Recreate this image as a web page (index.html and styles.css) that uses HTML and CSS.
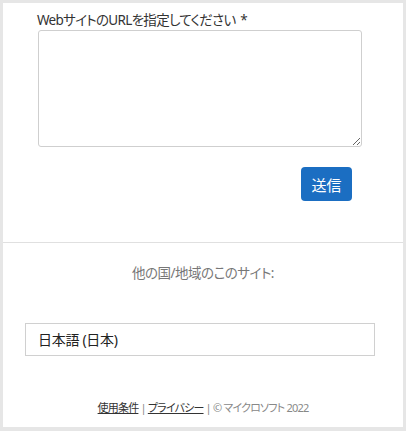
FILE: index.html
```html
<!DOCTYPE html>
<html lang="ja">
<head>
<meta charset="utf-8">
<link rel="stylesheet" href="styles.css">
</head>
<body>
<div class="frame">
  <label class="label" for="url">WebサイトのURLを指定してください *</label>
  <textarea id="url" class="url-box"></textarea>
  <button class="submit" type="button">送信</button>
  <div class="divider"></div>
  <p class="caption">他の国/地域のこのサイト:</p>
  <div class="locale">日本語 (日本)</div>
  <p class="footer"><a href="#">使用条件</a> | <a href="#">プライバシー</a> | © マイクロソフト 2022</p>
</div>
</body>
</html>
```
FILE: styles.css
```css
html, body {
  margin: 0;
  padding: 0;
  background: #ffffff;
}
body {
  font-family: "Noto Sans", "Noto Sans CJK JP", sans-serif;
  font-feature-settings: "palt";
}
.frame {
  box-sizing: border-box;
  width: 406px;
  height: 431px;
  border: 3px solid #e6e6e6;
  border-bottom-width: 4px;
  display: flex;
  flex-direction: column;
  background: #fff;
}
.label {
  margin: 7px 0 0 34px;
  font-size: 13.5px;
  letter-spacing: -0.7px;
  word-spacing: 2px;
  line-height: 20px;
  color: #333;
}
.url-box {
  box-sizing: border-box;
  margin: 0 0 0 35px;
  width: 324px;
  height: 117px;
  border: 1px solid #cfcfcf;
  border-radius: 3px;
  padding: 6px;
  font-family: inherit;
  outline: none;
}
.submit {
  align-self: flex-end;
  margin: 20px 51px 0 0;
  width: 51px;
  height: 34px;
  padding: 0;
  border: none;
  border-radius: 4px;
  background: #1b6ec2;
  color: #fff;
  font-family: inherit;
  font-feature-settings: "palt";
  font-size: 15px;
}
.divider {
  margin-top: 41px;
  height: 1px;
  background: #e0e0e0;
}
.caption {
  margin: 20px 0 0;
  text-align: center;
  font-size: 13.5px;
  letter-spacing: -0.5px;
  line-height: 20px;
  color: #777;
}
.locale {
  box-sizing: border-box;
  margin: 40px 0 0 22px;
  width: 350px;
  height: 33px;
  border: 1px solid #d0d0d0;
  padding: 0 12px;
  font-size: 14px;
  letter-spacing: -0.3px;
  line-height: 31px;
  color: #222;
}
.footer {
  margin: 44px 0 0;
  text-align: center;
  font-size: 11px;
  letter-spacing: -0.8px;
  line-height: 16px;
  color: #888;
}
.footer a {
  color: #333;
  text-decoration: underline;
}
```
